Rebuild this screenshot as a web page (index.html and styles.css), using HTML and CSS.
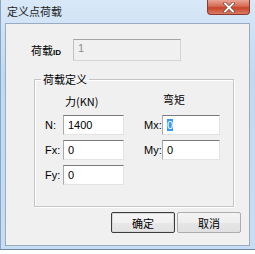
FILE: index.html
```html
<!DOCTYPE html>
<html lang="zh-CN">
<head>
  <meta charset="UTF-8" />
  <title>定义点荷载</title>
  <link rel="stylesheet" href="styles.css">
</head>
<body>
  <div class="window">
    <div class="titlebar">
      <span class="title">定义点荷载</span>
      <div class="close">
        <svg width="16" height="11" viewBox="0 0 16 11">
          <path d="M4 1.5 L12 9.5 M12 1.5 L4 9.5" stroke="#8a4a40" stroke-width="3.4" stroke-linecap="square"/>
          <path d="M4 1.5 L12 9.5 M12 1.5 L4 9.5" stroke="#ffffff" stroke-width="1.8" stroke-linecap="square"/>
        </svg>
      </div>
    </div>

    <div class="client">
      <div class="id-row">
        <span class="id-label">荷载<span class="small">ID</span></span>
        <div class="field disabled">1</div>
      </div>

      <fieldset class="group">
        <legend>荷载定义</legend>
        <div class="grid">
          <span></span><span class="head">力(KN)</span>
          <span></span><span class="head head-r">弯矩</span>

          <label class="lbl">N:</label><div class="field">1400</div>
          <label class="lbl lbl-r">Mx:</label><div class="field"><span class="sel">0</span></div>

          <label class="lbl">Fx:</label><div class="field">0</div>
          <label class="lbl lbl-r">My:</label><div class="field">0</div>

          <label class="lbl">Fy:</label><div class="field">0</div>
          <span></span><span></span>
        </div>
      </fieldset>

      <div class="buttons">
        <button class="btn default">确定</button>
        <button class="btn">取消</button>
      </div>
    </div>
  </div>
</body>
</html>
```

FILE: styles.css
```css
body {
  margin: 0;
  padding: 0;
  background: #ffffff;
  font-family: "Liberation Sans", "Noto Sans CJK SC", sans-serif;
  font-size: 11px;
  color: #000;
}

.window {
  width: 255px;
  height: 250px;
  box-sizing: border-box;
  background: linear-gradient(to bottom, #d8e8f7, #c2d9f0 30%, #c8ddf2);
  border-left: 1px solid #8aa6c4;
  border-bottom: 1px solid #6d86a3;
  padding: 0 5px 0 4px;
}

.titlebar {
  height: 23px;
  display: flex;
  align-items: flex-start;
  justify-content: space-between;
}

.title {
  font-family: "Noto Sans CJK SC", sans-serif;
  font-size: 11px;
  line-height: 23px;
  margin-left: 2px;
  color: #1e1e1e;
}

.close {
  width: 43px;
  height: 15px;
  box-sizing: border-box;
  border: 1px solid #8b3a2c;
  border-top: none;
  border-radius: 0 0 4px 4px;
  background: linear-gradient(to bottom, #e9a594, #d66a52 45%, #c7442b 55%, #db7a63);
  display: flex;
  align-items: center;
  justify-content: center;
}

.client {
  height: 223px;
  box-sizing: border-box;
  background: #f0f0f0;
  border: 1px solid #97abc2;
}

.id-row {
  display: flex;
  align-items: center;
  margin-top: 15px;
  padding-left: 25px;
}

.id-label {
  width: 42px;
  font-family: "Noto Sans CJK SC", sans-serif;
  font-size: 11px;
}

.id-label .small {
  font-family: "Liberation Sans", sans-serif;
  font-size: 8px;
  font-weight: bold;
}

.field {
  height: 20px;
  box-sizing: border-box;
  background: #fff;
  border: 1px solid #e3e3e3;
  border-top-color: #7a7a7a;
  border-left-color: #a9a9a9;
  padding-left: 4px;
  line-height: 18px;
  font-size: 11px;
}

.field.disabled {
  width: 108px;
  height: 22px;
  line-height: 16px;
  background: #f0f0f0;
  color: #8d8d8d;
  border-color: #d5d5d5;
  border-top-color: #a5a5a5;
  border-left-color: #c0c0c0;
}

.sel {
  background: #3399ff;
  color: #fff;
}

.group {
  width: 200px;
  box-sizing: border-box;
  margin: 11px 0 0 28px;
  padding: 7px 0 21px 0;
  border: 1px solid #c4c4c4;
  box-shadow: inset 1px 1px 0 #fff, 1px 1px 0 #fff;
}

.group legend {
  margin-left: 6px;
  padding: 0 2px;
  line-height: 14px;
  font-family: "Noto Sans CJK SC", sans-serif;
  font-size: 11px;
}

.grid {
  display: grid;
  grid-template-columns: 28px 61px 38px 58px;
  grid-template-rows: 17px 20px 20px 20px;
  row-gap: 5px;
}

.head {
  font-family: "Noto Sans CJK SC", sans-serif;
  font-size: 11px;
  line-height: 17px;
  padding-left: 2px;
}

.head-r {
  line-height: 13px;
  padding-left: 1px;
}

.lbl {
  padding-left: 10px;
  line-height: 20px;
}

.lbl-r {
  padding-left: 20px;
}

.buttons {
  display: flex;
  justify-content: flex-end;
  gap: 2px;
  margin-top: 5px;
  padding-right: 8px;
}

.btn {
  width: 64px;
  height: 21px;
  padding: 0;
  font-family: "Noto Sans CJK SC", sans-serif;
  font-size: 11px;
  color: #000;
  border: 1px solid #adadad;
  border-radius: 2px;
  background: linear-gradient(to bottom, #f3f3f3, #eeeeee 50%, #e6e6e6 51%, #e0e0e0);
}

.btn.default {
  border: 1px solid #3c3c3c;
  box-shadow: inset 0 0 0 1px #d8d8d8;
  background: linear-gradient(to bottom, #f5f5f5, #f0f0f0 50%, #e8e8e8 51%, #e2e2e2);
}
```
